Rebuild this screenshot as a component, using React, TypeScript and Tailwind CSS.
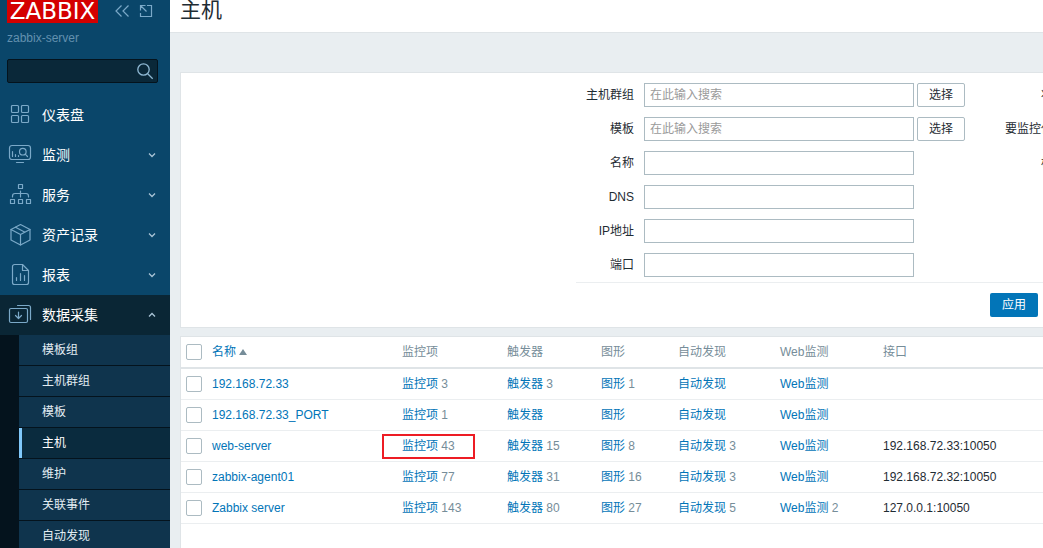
import React, { useState } from 'react';
import clsx from 'clsx';

interface IconProps {
  children: React.ReactNode;
}

const MenuIcon: React.FC<IconProps> = ({ children }) => (
  <svg
    className="h-6 w-6 shrink-0"
    viewBox="0 0 24 24"
    fill="none"
    stroke="#7ba9c8"
    strokeWidth="1.2"
    strokeLinecap="round"
    strokeLinejoin="round"
    aria-hidden="true"
  >
    {children}
  </svg>
);

const menuItems = [
  {
    label: '仪表盘',
    icon: (
      <>
        <rect x="3.5" y="2.5" width="7" height="7" rx="1" />
        <rect x="13.5" y="2.5" width="7" height="7" rx="1" />
        <rect x="3.5" y="12.5" width="7" height="7" rx="1" />
        <rect x="13.5" y="12.5" width="7" height="7" rx="1" />
      </>
    ),
  },
  {
    label: '监测',
    expandable: true,
    icon: (
      <>
        <rect x="1.5" y="2.5" width="21" height="14" rx="2.5" />
        <path d="M8.5 19.5h7" />
        <path d="M4.5 8.5v5M7.5 11.5v2M10.5 12.5v1" />
        <circle cx="14.8" cy="8.7" r="3.3" />
        <path d="M17.2 11.2l2.3 2.3" />
      </>
    ),
  },
  {
    label: '服务',
    expandable: true,
    icon: (
      <>
        <rect x="10.5" y="1.5" width="4" height="4" />
        <rect x="2.5" y="16.5" width="4" height="4" />
        <rect x="10.5" y="16.5" width="4" height="4" />
        <rect x="18.5" y="16.5" width="4" height="4" />
        <path d="M12.5 8v6M4.5 14v-1q0-2.500 2.500-2.500h11q2.500 0 2.500 2.500v1" />
      </>
    ),
  },
  {
    label: '资产记录',
    expandable: true,
    icon: (
      <>
        <path d="M12.500 1.500l9.500 5v10.500l-9.500 5-9.500-5V6.500z" />
        <path d="M3 6.500l9.500 5 9.500-5M12.500 11.500V22M7.500 4.200l9.500 5" />
      </>
    ),
  },
  {
    label: '报表',
    expandable: true,
    icon: (
      <>
        <path d="M14.500 1.500H6.500a2 2 0 0 0-2 2v16a2 2 0 0 0 2 2h12a2 2 0 0 0 2-2v-12z" />
        <path d="M14.500 1.500v6h6M8.500 14.500v3M12.500 10.500v7M16.500 12.500v5" />
      </>
    ),
  },
  {
    label: '数据采集',
    expandable: true,
    active: true,
    icon: (
      <>
        <rect x="1.5" y="5.500" width="18" height="14" rx="1.500" />
        <path d="M9.500 2.500h11a2 2 0 0 1 2 2v12" />
        <path d="M10.500 9v6.500M7.500 12.500l3 3 3-3" />
      </>
    ),
  },
];

const subItems = ['模板组', '主机群组', '模板', '主机', '维护', '关联事件', '自动发现'];

const filterFields = [
  { id: 'groups', label: '主机群组', select: true },
  { id: 'templates', label: '模板', select: true },
  { id: 'name', label: '名称' },
  { id: 'dns', label: 'DNS' },
  { id: 'ip', label: 'IP地址' },
  { id: 'port', label: '端口' },
];

const extraFields = [
  { id: 'status', label: '状态' },
  { id: 'proxy', label: '要监控代理' },
  { id: 'tags', label: '标记' },
];

interface Host {
  name: string;
  items?: number;
  triggers?: number;
  graphs?: number;
  discovery?: number;
  web?: number;
  iface?: string;
  marked?: boolean;
}

const hosts: Host[] = [
  { name: '192.168.72.33', items: 3, triggers: 3, graphs: 1 },
  { name: '192.168.72.33_PORT', items: 1 },
  { name: 'web-server', items: 43, triggers: 15, graphs: 8, discovery: 3, iface: '192.168.72.33:10050', marked: true },
  { name: 'zabbix-agent01', items: 77, triggers: 31, graphs: 16, discovery: 3, iface: '192.168.72.32:10050' },
  { name: 'Zabbix server', items: 143, triggers: 80, graphs: 27, discovery: 5, web: 2, iface: '127.0.0.1:10050' },
];

const inputClass = 'h-6 w-[270px] border border-[#acbbc2] bg-white px-[5px] text-xs outline-none placeholder:text-[#9a9a9a]';
const checkboxClass = 'block h-4 w-4 appearance-none rounded-[2px] border border-[#acbbc2] bg-white checked:bg-[#0275b8]';

const CountLink: React.FC<{ label: string; count?: number }> = ({ label, count }) => (
  <>
    <a href="#" className="text-[#0275b8]">{label}</a>
    {count !== undefined && <span className="text-[#768d99]"> {count}</span>}
  </>
);

const Sidebar = () => (
  <aside className="flex w-[170px] shrink-0 flex-col overflow-hidden bg-[#0a466a]">
    <div className="flex shrink-0 items-start pl-[7px]">
      <a href="#" className="h-[23px] w-[91px] bg-[#d40000] text-center font-['DejaVu_Sans',sans-serif] text-[23px] leading-[22px] text-white">
        ZABBIX
      </a>
      <button type="button" aria-label="收起" className="ml-4 mt-1">
        <svg width="16" height="14" viewBox="0 0 16 14" fill="none" stroke="#7ba9c8" strokeWidth="1.2">
          <path d="M7.500 1.500L2 7l5.500 5.500M14.500 1.500L9 7l5.500 5.500" />
        </svg>
      </button>
      <button type="button" aria-label="隐藏" className="ml-2 mt-1">
        <svg width="16" height="14" viewBox="0 0 16 14" fill="none" stroke="#7ba9c8" strokeWidth="1.2">
          <path d="M9 1.500h4.500v11h-11V9M2.500 6.500v-5h5M2.500 1.500l6 6" />
        </svg>
      </button>
    </div>
    <div className="mt-[7px] shrink-0 px-[7px] text-xs leading-4 text-[#6391af]">zabbix-server</div>
    <form className="ml-[7px] mr-3 mt-[13px] flex h-6 shrink-0 items-center rounded-[2px] border border-[#04131d] bg-[#0a2839]">
      <input type="text" aria-label="搜索" className="h-full min-w-0 flex-1 bg-transparent px-1 text-xs text-white outline-none" />
      <button type="button" aria-label="搜索" className="pr-[3px]">
        <svg width="18" height="18" viewBox="0 0 18 18" fill="none" stroke="#8fb9d4" strokeWidth="1.3">
          <circle cx="7.500" cy="7.500" r="5.700" />
          <path d="M11.700 11.700l5 5" />
        </svg>
      </button>
    </form>
    <nav className="mt-3 flex flex-1 flex-col">
      {menuItems.map((item) => (
        <a
          key={item.label}
          href="#"
          className={clsx(
            'flex h-10 shrink-0 items-center pl-2 pr-[13px] text-sm leading-5 text-white',
            item.active && 'bg-[#0a2635]',
          )}
        >
          <MenuIcon>{item.icon}</MenuIcon>
          <span className="ml-[10px] flex-1">{item.label}</span>
          {item.expandable && (
            <svg width="10" height="10" viewBox="0 0 10 10" fill="none" stroke="#a9c4d6" strokeWidth="1.3" aria-hidden="true">
              <path d={item.active ? 'M2 6.500l3-3 3 3' : 'M2 3.500l3 3 3-3'} />
            </svg>
          )}
        </a>
      ))}
      <ul className="flex-1 border-l-[19px] border-[#04131d] bg-[#0f344d]">
        {subItems.map((label) => (
          <li key={label} className="border-b border-[#04131d]">
            <a
              href="#"
              className={clsx(
                'block h-[30px] border-l-[3px] pl-5 text-xs leading-[30px]',
                label === '主机'
                  ? 'border-[#80c8fa] bg-[#0a2b3e] text-white'
                  : 'border-transparent text-[#e3edf3]',
              )}
            >
              {label}
            </a>
          </li>
        ))}
      </ul>
    </nav>
  </aside>
);

const Filter = () => (
  <form className="overflow-hidden border border-r-0 border-[#dfe4e7] bg-white py-[10px]">
    <div className="ml-auto w-[467px]">
      <div className="flex h-[200px] gap-10 border-b border-[#ebeef0]">
        <div className="flex shrink-0 flex-col gap-[10px]">
          {filterFields.map((field) => (
            <div key={field.id} className="flex w-[389px] items-center">
              <label htmlFor={field.id} className="mr-[10px] w-[58px] text-right">{field.label}</label>
              <input
                id={field.id}
                type="text"
                placeholder={field.select ? '在此输入搜索' : undefined}
                className={inputClass}
              />
              {field.select && (
                <button type="button" className="ml-[3px] h-6 w-12 rounded-[2px] border border-[#acbbc2] bg-white leading-[22px]">
                  选择
                </button>
              )}
            </div>
          ))}
        </div>
        <div className="flex shrink-0 flex-col gap-[10px]">
          {extraFields.map((field) => (
            <div key={field.id} className="flex items-center">
              <label htmlFor={field.id} className="mr-[10px] w-[60px] text-right">{field.label}</label>
              <input id={field.id} type="text" className={inputClass} />
            </div>
          ))}
        </div>
      </div>
      <div className="flex justify-end pr-[5px] pt-[10px]">
        <button type="button" className="h-6 w-12 rounded-[2px] bg-[#0275b8] text-white">应用</button>
      </div>
    </div>
  </form>
);

const HostTable = () => {
  const [selected, setSelected] = useState<string[]>([]);

  const toggle = (name: string) => {
    setSelected((prev) => (prev.includes(name) ? prev.filter((n) => n !== name) : [...prev, name]));
  };

  const allSelected = selected.length === hosts.length;

  return (
    <div className="mt-2 flex-1 border-l border-t border-[#dfe4e7] bg-white">
      <table className="w-full table-fixed border-collapse text-left">
        <colgroup>
          <col className="w-[26px]" />
          <col className="w-[190px]" />
          <col className="w-[105px]" />
          <col className="w-[94px]" />
          <col className="w-[77px]" />
          <col className="w-[102px]" />
          <col className="w-[103px]" />
          <col />
        </colgroup>
        <thead>
          <tr className="h-[31px] border-b-2 border-[#dfe4e7] text-[#768d99] [&>th]:px-[5px] [&>th]:font-normal">
            <th>
              <input
                type="checkbox"
                aria-label="全选"
                checked={allSelected}
                onChange={() => setSelected(allSelected ? [] : hosts.map((h) => h.name))}
                className={checkboxClass}
              />
            </th>
            <th>
              <a href="#" className="flex items-center gap-[3px] text-[#0275b8]">
                名称
                <svg width="8" height="6" viewBox="0 0 8 6" fill="#768d99" aria-hidden="true">
                  <path d="M4 0l4 6H0z" />
                </svg>
              </a>
            </th>
            <th>监控项</th>
            <th>触发器</th>
            <th>图形</th>
            <th>自动发现</th>
            <th>Web监测</th>
            <th>接口</th>
          </tr>
        </thead>
        <tbody>
          {hosts.map((host) => (
            <tr key={host.name} className="h-[31px] border-b border-[#ebeef0] [&>td]:px-[5px]">
              <td>
                <input
                  type="checkbox"
                  aria-label={host.name}
                  checked={selected.includes(host.name)}
                  onChange={() => toggle(host.name)}
                  className={checkboxClass}
                />
              </td>
              <td><a href="#" className="text-[#0275b8]">{host.name}</a></td>
              <td className="relative">
                <CountLink label="监控项" count={host.items} />
                {host.marked && (
                  <span className="pointer-events-none absolute -left-[15px] top-[3px] h-[25px] w-[93px] border-2 border-[#ed1c24]" />
                )}
              </td>
              <td><CountLink label="触发器" count={host.triggers} /></td>
              <td><CountLink label="图形" count={host.graphs} /></td>
              <td><CountLink label="自动发现" count={host.discovery} /></td>
              <td><CountLink label="Web监测" count={host.web} /></td>
              <td>{host.iface}</td>
            </tr>
          ))}
        </tbody>
      </table>
    </div>
  );
};

const App: React.FC = () => (
  <div className="flex h-screen overflow-hidden bg-[#e9eef1] font-['Liberation_Sans','Noto_Sans_CJK_SC',sans-serif] text-xs leading-4 text-[#1f2c33]">
    <Sidebar />
    <main className="flex min-w-0 flex-1 flex-col overflow-hidden">
      <header className="h-[33px] shrink-0 border-b border-[#dfe4e7] bg-white pl-[10px]">
        <h1 className="text-[21px] leading-5">主机</h1>
      </header>
      <div className="flex flex-1 flex-col pl-[10px] pt-[39px]">
        <Filter />
        <HostTable />
      </div>
    </main>
  </div>
);

export default App;
